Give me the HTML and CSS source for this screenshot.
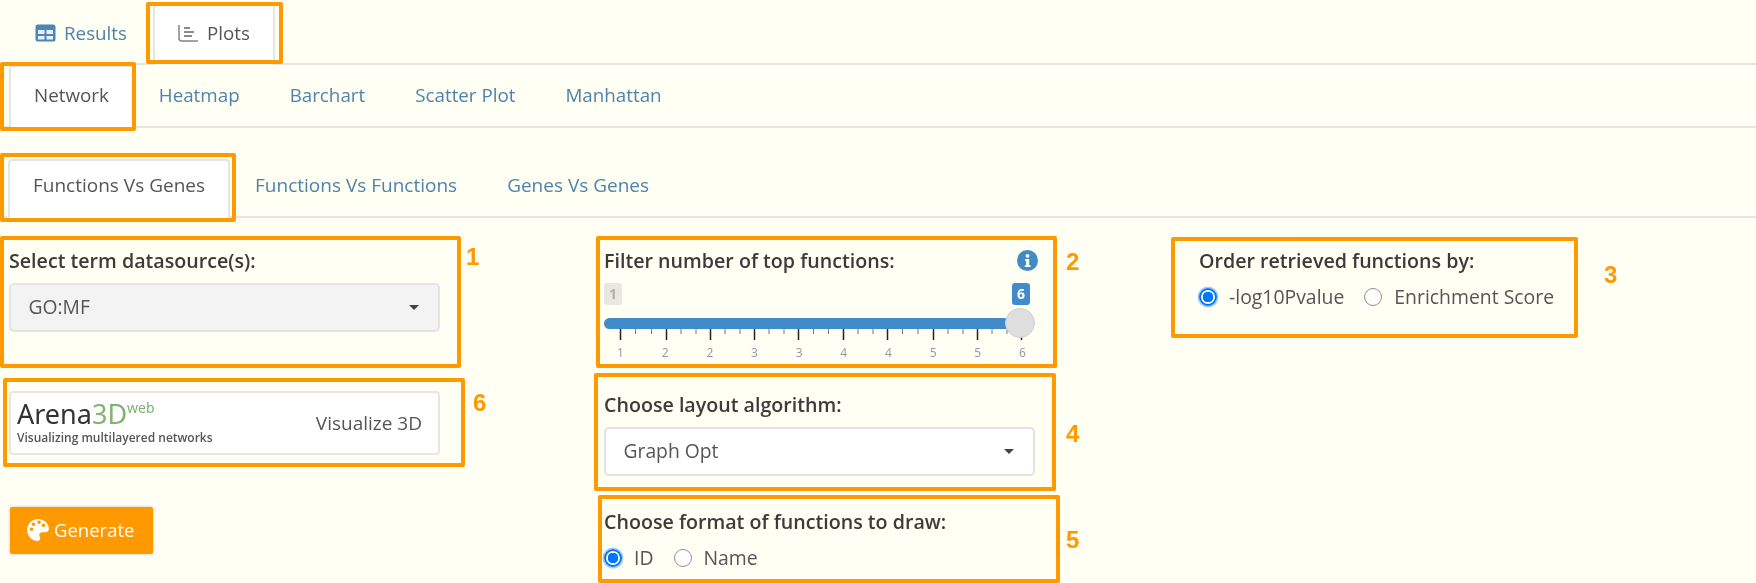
FILE: index.html
```html
<!DOCTYPE html>
<html lang="en">
<head>
<meta charset="utf-8">
<title>Plots</title>
<link rel="stylesheet" href="styles.css">
</head>
<body>
<div class="page">
  <nav class="tabs tabs-main">
    <a class="tab">
      <svg class="ico" width="21" height="18" viewBox="0 0 21 18"><rect x="0.5" y="0.5" width="20" height="17" rx="2.5" fill="#4a86b8"/><rect x="3" y="6" width="6.5" height="4" fill="#e8f0f6"/><rect x="11.5" y="6" width="6.5" height="4" fill="#e8f0f6"/><rect x="3" y="12" width="6.5" height="3.5" fill="#e8f0f6"/><rect x="11.5" y="12" width="6.5" height="3.5" fill="#e8f0f6"/></svg>
      Results
    </a>
    <a class="tab active">
      <svg class="ico" width="21" height="18" viewBox="0 0 21 18" fill="none" stroke="#666" stroke-width="1.5"><path d="M1 1v13.5a2.5 2.5 0 0 0 2.5 2.500H20" stroke="#8a8378"/><path d="M6 4h6M6 8h10M6 12h8"/></svg>
      Plots
    </a>
  </nav>
  <nav class="tabs tabs-sub">
    <a class="tab active">Network</a>
    <a class="tab">Heatmap</a>
    <a class="tab">Barchart</a>
    <a class="tab">Scatter Plot</a>
    <a class="tab">Manhattan</a>
  </nav>
  <nav class="tabs tabs-third">
    <a class="tab active">Functions Vs Genes</a>
    <a class="tab">Functions Vs Functions</a>
    <a class="tab">Genes Vs Genes</a>
  </nav>

  <main class="columns">
    <section class="col">
      <div class="label">Select term datasource(s):</div>
      <div class="select select-grey"><span>GO:MF</span><i class="caret"></i></div>
      <div class="arena">
        <div class="logo">
          <div class="logo-name">Arena<span class="green">3D<sup>web</sup></span></div>
          <div class="logo-tag">Visualizing multilayered networks</div>
        </div>
        <span class="arena-link">Visualize 3D</span>
      </div>
      <button class="generate" type="button">
        <svg width="22" height="22" viewBox="0 0 22 22"><path fill="#fff" fill-rule="evenodd" d="M9.5.2C4.6.8.8 4.800.2 9.600-.6 15.800 4.200 21.600 10.400 22c2 .1 3-1.300 2.800-2.800-.2-1.300-.9-2.100-.9-3.200 0-1.600 1.300-2.700 2.900-2.700h3.200c2 0 3.500-1.500 3.500-3.500C21.800 3.900 16-.6 9.500.2zM4.500 12a1.800 1.800 0 1 1 0-3.600 1.800 1.800 0 0 1 0 3.600zM6.500 7a1.800 1.800 0 1 1 0-3.600 1.800 1.800 0 0 1 0 3.600zM12 5a1.800 1.800 0 1 1 0-3.600A1.800 1.800 0 0 1 12 5zM16.500 8a1.800 1.800 0 1 1 0-3.600 1.800 1.800 0 0 1 0 3.600z"/></svg>
        Generate
      </button>
    </section>

    <section class="col">
      <div class="label label-info">
        <span>Filter number of top functions:</span>
        <svg width="21" height="21" viewBox="0 0 21 21"><circle cx="10.500" cy="10.500" r="10.500" fill="#3f8cc2"/><circle cx="10.500" cy="5.800" r="1.900" fill="#fff"/><path fill="#fff" d="M8.200 9h4v6.200h1.300v1.900H7.800v-1.900h1.300v-4.300h-.9z"/></svg>
      </div>
      <div class="slider">
        <div class="badges"><span class="badge">1</span><span class="badge badge-on">6</span></div>
        <div class="track"></div>
        <span class="handle"></span>
        <svg class="ticks" width="430" height="12" viewBox="0 0 430 12" stroke="#222">
          <path stroke-width="1.500" d="M16.500 0v11M62.500 0v11M106.500 0v11M150.500 0v11M194.500 0v11M239.500 0v11M283.500 0v11M329.500 0v11M373.500 0v11M417.500 0v11"/>
          <path stroke-width="1" stroke="#777" d="M31.500 0v5M47.500 0v5M77 0v5M92 0v5M121 0v5M136 0v5M165 0v5M180 0v5M209.500 0v5M224.500 0v5M254 0v5M269 0v5M298.500 0v5M314 0v5M344 0v5M359 0v5M388 0v5M403 0v5"/>
        </svg>
        <div class="tick-labels"><span>1</span><span>2</span><span>2</span><span>3</span><span>3</span><span>4</span><span>4</span><span>5</span><span>5</span><span>6</span></div>
      </div>
      <div class="label label-second">Choose layout algorithm:</div>
      <div class="select"><span>Graph Opt</span><i class="caret"></i></div>
      <div class="label label-third">Choose format of functions to draw:</div>
      <div class="radios">
        <label class="radio"><input type="radio" name="fmt" checked>ID</label>
        <label class="radio"><input type="radio" name="fmt">Name</label>
      </div>
    </section>

    <section class="col">
      <div class="label">Order retrieved functions by:</div>
      <div class="radios">
        <label class="radio"><input type="radio" name="ord" checked>-log10Pvalue</label>
        <label class="radio"><input type="radio" name="ord">Enrichment Score</label>
      </div>
    </section>
  </main>

  <div class="note note-plots"></div>
  <div class="note note-network"></div>
  <div class="note note-functions"></div>
  <div class="note note-1"></div>
  <div class="note note-2"></div>
  <div class="note note-3"></div>
  <div class="note note-4"></div>
  <div class="note note-5"></div>
  <div class="note note-6"></div>
  <span class="num num-1">1</span>
  <span class="num num-2">2</span>
  <span class="num num-3">3</span>
  <span class="num num-4">4</span>
  <span class="num num-5">5</span>
  <span class="num num-6">6</span>
</div>
</body>
</html>
```
FILE: styles.css
```css
* { box-sizing: border-box; }
html, body { margin: 0; padding: 0; }
body {
  background: #fffff3;
  font-family: "Open Sans", "Noto Sans", sans-serif;
  font-size: 18.8px;
  color: #555;
  overflow: hidden;
}
.page {
  position: relative;
  width: 1756px;
  height: 583px;
  padding-top: 2px;
  overflow: hidden;
  filter: blur(0.35px);
}
.tabs {
  display: flex;
  align-items: stretch;
  border-bottom: 2px solid #e6e6e0;
}
.tab {
  display: flex;
  align-items: center;
  gap: 8px;
  padding: 0 23px 5px;
  color: #4f83ad;
  border: 2px solid transparent;
  border-bottom: 0;
  border-radius: 4px 4px 0 0;
  margin-bottom: -2px;
  white-space: nowrap;
}
.tab.active {
  color: #555;
  background: #fff;
  border-color: #e6e6e0;
}
.ico { flex: none; }
.tabs-main { height: 63px; padding-left: 10px; gap: 1px; }
.tabs-main .tab { padding-bottom: 3px; }
.tabs-sub { height: 63px; padding-left: 9px; }
.tabs-third { height: 59px; margin-top: 31px; padding-left: 8px; font-size: 19px; }
.tabs-third .tab { padding-bottom: 9px; }

.columns {
  display: grid;
  grid-template-columns: 431px 431px 1fr;
  column-gap: 164px;
  padding: 30px 0 0 9px;
}
.col { min-width: 0; }
.label {
  height: 24px;
  line-height: 25px;
  font-size: 19.65px;
  font-weight: 600;
  color: #3b3b3b;
  white-space: nowrap;
}
.label-info {
  display: flex;
  justify-content: space-between;
  align-items: center;
  margin-right: -3px;
}
.select {
  display: flex;
  align-items: center;
  justify-content: space-between;
  height: 49px;
  margin-top: 11px;
  padding: 0 19px 3px 17.500px;
  background: #fff;
  border: 2px solid #e3e3e3;
  border-radius: 5px;
  font-size: 19.300px;
}
.select-grey { background: #f3f3f3; }
.caret {
  width: 0;
  height: 0;
  margin-top: 3px;
  border: 5px solid transparent;
  border-top-color: #444;
  border-bottom: 0;
}
.arena {
  display: flex;
  align-items: center;
  justify-content: space-between;
  height: 64px;
  margin-top: 59px;
  padding: 0 16px 0 6px;
  background: #fff;
  border: 2px solid #e6e6e6;
  border-radius: 4px;
}
.logo-name {
  font-family: "Noto Sans", sans-serif;
  font-size: 27px;
  line-height: 30px;
  color: #333;
  margin-top: -3px;
}
.green { color: #7db36f; }
.green sup {
  font-size: 14px;
  line-height: 0;
  vertical-align: 11px;
}
.logo-tag {
  font-size: 12px;
  line-height: 14px;
  font-weight: 600;
  color: #555;
  margin-top: 2px;
  white-space: nowrap;
}
.arena-link { color: #555; font-size: 19px; }
.generate {
  display: flex;
  align-items: center;
  gap: 5px;
  width: 143px;
  height: 47px;
  margin: 52px 0 0 1px;
  padding: 0 0 2px 17px;
  border: 0;
  border-radius: 2px;
  background: #ff9900;
  color: #fff;
  font: inherit;
  font-size: 18.5px;
  box-shadow: 0 0 3px rgba(0, 0, 0, 0.25);
}
.slider { position: relative; height: 84px; margin-top: 11px; }
.badges {
  display: flex;
  justify-content: space-between;
  padding-right: 5px;
}
.badge {
  width: 18px;
  height: 22px;
  line-height: 22px;
  text-align: center;
  font-size: 14px;
  font-weight: 700;
  color: #b7ae9c;
  background: #e8e8e2;
  border-radius: 3px;
}
.badge-on { color: #fff; background: #428bca; }
.track {
  height: 11px;
  margin-top: 13px;
  margin-right: 20px;
  background: #428bca;
  border-radius: 6px;
}
.handle {
  position: absolute;
  left: 401px;
  top: 25px;
  width: 30px;
  height: 30px;
  border-radius: 50%;
  background: #dedede;
  border: 1.500px solid #cfcfcf;
}
.ticks { display: block; }
.tick-labels {
  display: flex;
  justify-content: space-between;
  margin-top: 4px;
  padding: 0 8px 0 12px;
  font-size: 12px;
  line-height: 16px;
  color: #8d9aa6;
}
.tick-labels span { width: 9px; text-align: center; }
.label-second { margin-top: 25px; }
.label-third { margin-top: 33px; }
.radios {
  display: flex;
  align-items: center;
  gap: 20px;
  margin-top: 13px;
  font-size: 19.400px;
}
.radio {
  display: flex;
  align-items: center;
  gap: 12px;
  line-height: 24px;
  color: #555;
}
.radio input {
  appearance: none;
  width: 18px;
  height: 18px;
  margin: 0;
  border: 1.500px solid #8f8f8f;
  border-radius: 50%;
  background: #fff;
}
.radio input:checked {
  border: 2px solid #0075ff;
  background: radial-gradient(circle, #0075ff 0 5px, #fff 5.500px);
  box-shadow: 0 0 0 1.500px rgba(0, 117, 255, 0.35);
}

.note {
  position: absolute;
  border: 4px solid #ff9900;
  border-radius: 2px;
  pointer-events: none;
}
.note-plots { left: 146px; top: 2px; width: 137px; height: 62px; }
.note-network { left: 0; top: 62px; width: 136px; height: 69px; }
.note-functions { left: 0; top: 153px; width: 236px; height: 69px; }
.note-1 { left: 0; top: 236px; width: 461px; height: 132px; }
.note-2 { left: 596px; top: 236px; width: 461px; height: 132px; }
.note-3 { left: 1171px; top: 237px; width: 407px; height: 101px; }
.note-4 { left: 594px; top: 373px; width: 462px; height: 118px; }
.note-5 { left: 598px; top: 495px; width: 462px; height: 88px; }
.note-6 { left: 3px; top: 378px; width: 462px; height: 89px; }
.num {
  position: absolute;
  font-family: "Liberation Sans", Arial, sans-serif;
  font-weight: 700;
  font-size: 24px;
  line-height: 28px;
  color: #ff9900;
}
.num-1 { left: 466px; top: 243px; }
.num-2 { left: 1066px; top: 248px; }
.num-3 { left: 1604px; top: 261px; }
.num-4 { left: 1066px; top: 420px; }
.num-5 { left: 1066px; top: 526px; }
.num-6 { left: 473px; top: 389px; }
```
